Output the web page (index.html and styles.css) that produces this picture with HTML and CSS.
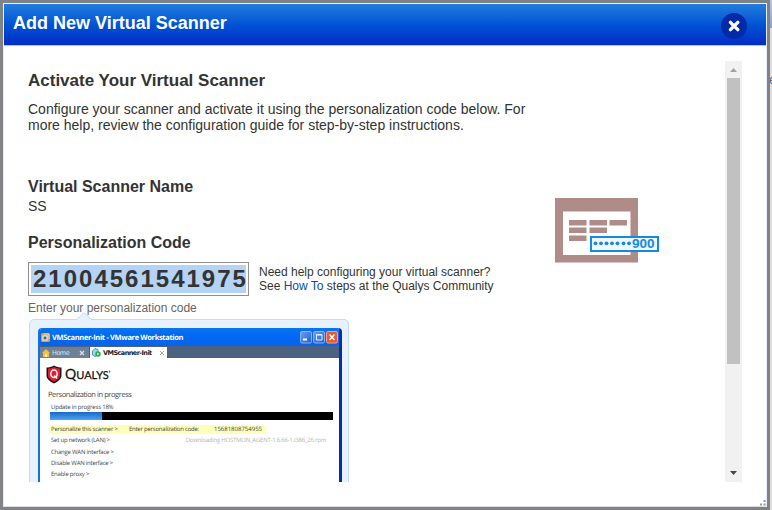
FILE: index.html
```html
<!DOCTYPE html>
<html lang="en">
<head>
<meta charset="utf-8">
<title>Add New Virtual Scanner</title>
<link rel="stylesheet" href="styles.css">
</head>
<body>
<div class="screen">
  <div class="dialog">
    <header class="titlebar">
      <h1 class="title">Add New Virtual Scanner</h1>
      <svg class="close" width="26" height="26" viewBox="0 0 26 26"><circle cx="13" cy="13" r="13" fill="#0229a8"/><path d="M9.4 9.4l7.4 7.2M16.8 9.4l-7.4 7.2" stroke="#fff" stroke-width="3.4" stroke-linecap="round"/></svg>
    </header>
    <div class="body">
      <main class="content">
        <section class="details">
          <h2 class="heading h-main">Activate Your Virtual Scanner</h2>
          <p class="intro"><span>Configure your scanner and activate it using the personalization code below. For</span><br><span>more help, review the configuration guide for step-by-step instructions.</span></p>
          <h2 class="heading h-name">Virtual Scanner Name</h2>
          <p class="name">SS</p>
          <h2 class="heading h-code">Personalization Code</h2>
          <div class="code-row">
            <div class="code"><span class="selected">21004561541975</span></div>
            <p class="help"><span>Need help configuring your virtual scanner?</span><br><span>See <a class="link">How To</a> steps at the Qualys Community</span></p>
          </div>
          <p class="caption">Enter your personalization code</p>
          <div class="callout">
            <svg class="notch" width="18" height="9" viewBox="0 0 18 9"><path d="M0 8.5L9 .8l9 7.7V9H0z" fill="#e8f2fe"/><path d="M1 8L9 .8 17 8" fill="none" stroke="#c0dcfa"/></svg>
            <div class="vm">
              <div class="vm-title">
                <svg width="9" height="9" viewBox="0 0 9 9"><rect width="9" height="9" rx="1.5" fill="#e99a2b"/><rect x="2" y="3" width="4" height="4" fill="#2867b8" stroke="#fff"/><path d="M3 1h5v5" fill="none" stroke="#f8d79c"/></svg>
                <span class="vm-name">VMScanner-Init - VMware Workstation</span>
                <svg class="win-buttons" width="38" height="13" viewBox="0 0 38 13">
                  <defs><linearGradient id="blue" x2="1" y2="1"><stop stop-color="#719fef"/><stop offset="1" stop-color="#205bd3"/></linearGradient></defs>
                  <rect x=".5" y=".5" width="11" height="11.5" rx="1.5" fill="url(#blue)" stroke="#82b3f4"/><path d="M3 8.5h4" stroke="#fff" stroke-width="2"/>
                  <rect x="13.5" y=".5" width="11" height="11.5" rx="1.5" fill="url(#blue)" stroke="#82b3f4"/><path d="M16.5 3.5h5.500v5.500h-5.500zM16 4h6" fill="none" stroke="#e5efff"/>
                  <rect x="26.500" y=".5" width="11" height="11.5" rx="1.5" fill="#e55a34" stroke="#f2a28d"/><path d="M29.500 3.500l5 5.500m0-5.500l-5 5.500" stroke="#fff" stroke-width="1.500"/>
                </svg>
              </div>
              <div class="tabs">
                <div class="tab home">
                  <svg width="8" height="8" viewBox="0 0 8 8"><path d="M0 4l4-4 4 4H7v4H1V4z" fill="#f5c13d"/><path d="M3 5h2v3H3z" fill="#fff0b0"/></svg>
                  <span class="tab-home">Home</span>
                  <svg class="x" width="6" height="6" viewBox="0 0 6 6"><path d="M1 1l4 4m0-4L1 5" stroke="#d9e2ec" stroke-width="1.300"/></svg>
                </div>
                <div class="tab active">
                  <svg width="9" height="9" viewBox="0 0 9 9"><path d="M.5 3L3 .500l3 1V7L3 8.500.500 7z" fill="#9bd7ec" stroke="#4a9dba"/><circle cx="6" cy="6" r="2.700" fill="#27a849"/><path d="M5.300 4.500v3l2-1.500z" fill="#fff"/></svg>
                  <span class="tab-vm">VMScanner-Init</span>
                  <svg class="x" width="6" height="6" viewBox="0 0 6 6"><path d="M1 1l4 4m0-4L1 5" stroke="#929292" stroke-width=".8"/></svg>
                </div>
              </div>
              <div class="vm-page">
                <div class="brand">
                  <svg width="16" height="19" viewBox="0 0 16 19"><path d="M8 .500c2.500 1.500 5 2 7.500 2v8c0 3.500-3.500 6-7.500 8-4-2-7.500-4.500-7.500-8v-8C3 2.500 5.500 2 8 .500z" fill="#151515"/><path d="M8 2c2 1 4 1.500 6 1.600v6.900c0 2.700-3 4.800-6 6.300-3-1.500-6-3.600-6-6.300V3.600C4 3.500 6 3 8 2z" fill="#e51c2b"/><ellipse cx="8" cy="8.800" rx="3.200" ry="3.800" fill="none" stroke="#fff" stroke-width="1.500"/><path d="M8.300 10.500l2.700 3" stroke="#fff" stroke-width="1.500"/></svg>
                  <span class="brand-name"><span class="brand-q">Q</span>UALYS<span class="mark">’</span></span>
                </div>
                <p class="stage">Personalization in progress</p>
                <p class="update">Update in progress 18%</p>
                <div class="progress"><div class="progress-fill"></div></div>
                <div class="row highlight"><span>Personalize this scanner &gt;</span><span class="c2">Enter personalization code:</span><span class="c3">15681808754955</span></div>
                <div class="row"><span>Set up network (LAN) &gt;</span><span class="download">Downloading HOSTMON_AGENT-1.6.66-1.i386_26.rpm</span></div>
                <div class="row">Change WAN interface &gt;</div>
                <div class="row">Disable WAN interface &gt;</div>
                <div class="row">Enable proxy &gt;</div>
              </div>
            </div>
          </div>
        </section>
        <svg class="picture" width="105" height="66" viewBox="0 0 105 66">
          <path d="M0 0h83v64.500H0z" fill="#b08c88"/><path d="M8 13.500h67.500V57H8z" fill="#fff"/>
          <path d="M14 22h17.500v5.500H14zM34.500 22H52v5.500H34.500zM54.500 22H72v5.500H54.500zM14 29.500h17.500V35H14zM34.500 29.500H52V35H34.500zM14 37.500h17.500V43H14z" fill="#b08c88"/>
          <rect x="36" y="39" width="67" height="14" fill="#f4f5f7" stroke="#118be3" stroke-width="2"/>
          <g fill="#118be3"><circle cx="40.500" cy="45.300" r="1.900"/><circle cx="46" cy="45.300" r="1.900"/><circle cx="51.500" cy="45.300" r="1.900"/><circle cx="57" cy="45.300" r="1.900"/><circle cx="62.500" cy="45.300" r="1.900"/><circle cx="68.500" cy="45.300" r="1.900"/><circle cx="74" cy="45.300" r="1.900"/></g>
          <text class="pic-code" x="77" y="50">900</text>
        </svg>
      </main>
      <div class="scrollbar">
        <svg class="arrow" width="17" height="17" viewBox="0 0 17 17"><path d="M5 11l3.500-4 3.500 4z" fill="#a3a3a3"/></svg>
        <div class="thumb"></div>
        <svg class="arrow" width="17" height="17" viewBox="0 0 17 17"><path d="M5 6h7l-3.500 4z" fill="#454545"/></svg>
      </div>
    </div>
    <svg class="grip" width="6" height="6" viewBox="0 0 6 6"><path d="M3.500 0h2v2h-2zM0 3.500h2v2H0zM3.500 3.500h2v2h-2z" fill="#999"/></svg>
  </div>
  <div class="behind"><div class="behind-top"></div><span class="behind-text">e</span></div>
</div>
</body>
</html>
```
FILE: styles.css
```css
* { box-sizing: border-box; }
body { margin: 0; font-family: "Liberation Sans", Arial, sans-serif; color: #333; }
h1, h2, p { margin: 0; }
svg { display: block; flex: none; }
span { white-space: nowrap; }
.screen { display: flex; width: 772px; height: 510px; background: #808285; overflow: hidden; }
.dialog { position: relative; width: 764px; height: 504px; margin: 3px 2px 3px 3px; background: #fff; border: 1px solid #e7eefb; border-bottom-color: #ddd; flex: none; }
.titlebar { display: flex; justify-content: space-between; height: 42px; padding: 0 19px 0 9px; background: linear-gradient(#247ddd, #0052d4 52%, #002dc6); border-bottom: 1px solid #b9c4e3; }
.title { font-size: 18px; line-height: 20px; padding-top: 9px; color: #fff; }
.close { margin-top: 9px; }
.body { display: flex; justify-content: space-between; height: 421px; margin: 15px 24px 0; overflow: hidden; }
.content { display: flex; }
.details { width: 527px; padding-top: 10px; }
.heading { font-size: 16px; line-height: 20px; }
.h-main { font-size: 17px; }
.intro { margin-top: 10px; font-size: 14px; line-height: 16px; }
.h-name { margin-top: 44px; }
.name { margin-top: 1px; font-size: 14px; line-height: 16px; }
.h-code { margin-top: 19px; }
.code-row { display: flex; margin-top: 9px; }
.code { width: 221px; height: 34px; padding: 2px; border: 1px solid #8f8f8f; }
.selected { display: block; height: 28px; padding-left: 2px; font-size: 24px; font-weight: bold; line-height: 27px; letter-spacing: 2px; background: #b4d3f5; }
.help { padding: 3px 0 0 10px; font-size: 12px; line-height: 14px; }
.link { color: #0c4da2; }
.caption { margin-top: 5px; font-size: 12px; line-height: 14px; color: #666; }
.callout { position: relative; width: 320px; height: 210px; margin: 4px 0 0 1px; padding: 8px 7px 0 8px; background: #e8f2fe; border: 1px solid #c0dcfa; border-radius: 5px; }
.notch { position: absolute; left: 45px; top: -8px; }
.vm { width: 304px; height: 210px; border: solid #156fe2; border-width: 0 3px 0 2px; border-right-color: #052ea9; border-radius: 4px 4px 0 0; background: #fff; overflow: hidden; text-rendering: geometricPrecision; }
.vm-title { display: flex; align-items: center; height: 18px; padding: 1px 0 0 1px; background: linear-gradient(#0875eb, #0268f5 45%, #0862e9); }
.vm-name { margin-left: 2px; font: bold 7.500px "Open Sans", sans-serif; color: #fff; letter-spacing: -.34px; }
.win-buttons { margin: 0 1px 0 auto; }
.tabs { display: flex; height: 11.500px; background: #4b6280; }
.tab { display: flex; align-items: center; height: 11px; margin-top: 1px; padding: 0 3px 0 2px; font: 6.500px "DejaVu Sans", sans-serif; }
.home { width: 49px; padding-right: 4px; color: #d9e2ec; background: #6f7f95; }
.active { width: 77px; padding-right: 2px; margin-left: 1px; background: #fff; color: #222; font-weight: bold; }
.x { margin-left: auto; }
.tab-home { margin-left: 2px; letter-spacing: -.5px; }
.tab-vm { margin-left: 2px; letter-spacing: -.55px; }
.vm-page { padding: 7px 6px 0; font-family: "Open Sans", sans-serif; color: #444; }
.brand { display: flex; height: 19px; }
.brand-name { margin-left: 3px; font: 11px/17px Lato, sans-serif; color: #111; -webkit-text-stroke: .25px #111; }
.brand-q { font-size: 14px; }
.mark { font-size: 7px; vertical-align: 3px; }
.stage { padding: 6px 0 0 2px; font-size: 7.500px; line-height: 10px; letter-spacing: -.42px; }
.update { padding-left: 5px; margin-top: 2px; font-size: 6px; line-height: 10px; letter-spacing: -.2px; }
.progress { width: 283px; height: 8px; margin: 0 0 5px 4px; background: #000; }
.progress-fill { width: 52px; height: 8px; background: linear-gradient(#1967c5, #4aa4f5); }
.row { display: flex; height: 11.250px; padding-left: 5px; font-size: 6px; line-height: 11px; letter-spacing: -.23px; }
.highlight { width: 217px; height: 9.500px; margin: 0 0 1.250px 3px; padding-left: 2px; line-height: 9px; background: #ffffb9; }
.c2 { margin-left: auto; }
.c3 { margin: 0 4px 0 15px; letter-spacing: 0; }
.download { margin: 0 7px 0 auto; color: #b5b5b5; }
.picture { margin-top: 137px; }
.pic-code { font: bold 13.500px "Liberation Sans", sans-serif; fill: #118be3; }
.scrollbar { display: flex; flex-direction: column; width: 17px; height: 421px; background: #f1f1f1; }
.thumb { width: 13px; height: 286px; margin-left: 2px; background: #c1c1c1; }
.arrow:last-child { margin-top: auto; }
.grip { position: absolute; right: 0; bottom: 0; }
.behind { width: 3px; margin-left: 1px; background: #dedede; overflow: hidden; }
.behind-top { height: 28px; background: linear-gradient(#b7c9e8, #829fd8); }
.behind-text { display: block; margin: 45px 0 0 -1px; font-size: 12px; color: #666; }
```
